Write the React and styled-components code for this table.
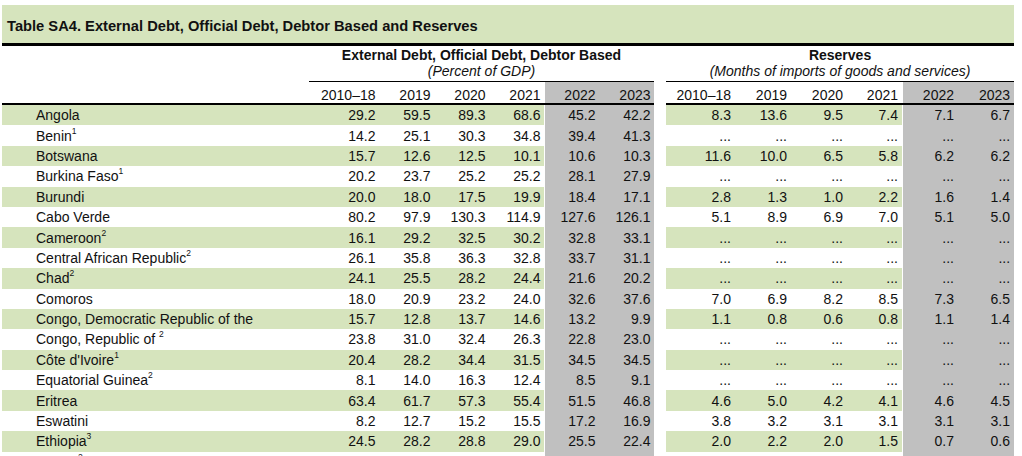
import React from 'react';
import styled, { createGlobalStyle } from 'styled-components';

const GREEN = '#d6e4bd';
const GRAY = '#c0c0c0';

const GlobalStyle = createGlobalStyle`
  html, body {
    margin: 0;
    padding: 0;
    background: #fff;
  }
  body {
    font-family: "Liberation Sans", Arial, sans-serif;
    color: #111;
    overflow: hidden;
  }
`;

const Page = styled.div`
  width: 1012px;
  margin: 5px 0 0 2px;
`;

const TitleBar = styled.div`
  height: 41px;
  box-sizing: border-box;
  padding: 13px 0 0 5px;
  background: ${GREEN};
  border-bottom: 3px solid #000;
  font-size: 14.7px;
  font-weight: bold;
  line-height: 16px;
  white-space: nowrap;
`;

const Table = styled.table`
  width: 1012px;
  table-layout: fixed;
  border-collapse: collapse;
  border-spacing: 0;
  font-size: 14px;
`;

const GroupTitle = styled.th`
  height: 17px;
  padding: 0;
  line-height: 16px;
  font-weight: bold;
  text-align: center;
  vertical-align: bottom;
  white-space: nowrap;
`;

const SubTitle = styled.th`
  height: 18px;
  padding: 0;
  line-height: 16px;
  font-weight: normal;
  font-style: italic;
  text-align: center;
  vertical-align: top;
  white-space: nowrap;
  border-bottom: ${(p) => (p.$ruled ? '1px solid #000' : 'none')};
`;

const YearCell = styled.th`
  height: 21px;
  padding: 0 ${(p) => p.$pad || 4}px 0 0;
  line-height: 16px;
  font-weight: normal;
  text-align: right;
  vertical-align: bottom;
  white-space: nowrap;
  background: ${(p) => (p.$shaded ? GRAY : 'transparent')};
  box-shadow: ${(p) => (p.$edge ? 'inset 1px 0 0 #fff' : 'none')};
  border-bottom: ${(p) => (p.$ruled ? '2px solid #000' : 'none')};
`;

const Row = styled.tr`
  background: ${(p) => (p.$striped ? GREEN : 'transparent')};
`;

const NameCell = styled.td`
  height: 20.4px;
  padding: 0 0 0 34px;
  line-height: 16px;
  text-align: left;
  vertical-align: middle;
  white-space: nowrap;
`;

const ValueCell = styled.td`
  height: 20.4px;
  padding: 0 ${(p) => p.$pad || 4}px 0 0;
  line-height: 16px;
  text-align: right;
  vertical-align: middle;
  white-space: nowrap;
  background: ${(p) => (p.$shaded ? GRAY : 'transparent')};
  box-shadow: ${(p) => (p.$edge ? 'inset 1px 0 0 #fff' : 'none')};
`;

const Spacer = styled.td`
  padding: 0;
  background: #fff;
`;

const SpacerHead = styled.th`
  padding: 0;
  background: #fff;
`;

const Note = styled.sup`
  position: relative;
  top: -7px;
  vertical-align: baseline;
  font-size: 8.5px;
  line-height: 0;
`;

const leftCols = [307, 70, 55, 55, 55, 55, 55];
const rightCols = [12, 69, 56, 56, 55, 56, 56];
const years = ['2010–18', '2019', '2020', '2021', '2022', '2023'];
const rightPad = [4, 4, 4, 4, 4, 4];
const leftPad = [3.5, 3.5, 3.5, 3.5, 3.5, 3.5];
const NA = ['...', '...', '...', '...', '...', '...'];

const rows = [
  ['Angola', '', ['29.2', '59.5', '89.3', '68.6', '45.2', '42.2'], ['8.3', '13.6', '9.5', '7.4', '7.1', '6.7']],
  ['Benin', '1', ['14.2', '25.1', '30.3', '34.8', '39.4', '41.3'], NA],
  ['Botswana', '', ['15.7', '12.6', '12.5', '10.1', '10.6', '10.3'], ['11.6', '10.0', '6.5', '5.8', '6.2', '6.2']],
  ['Burkina Faso', '1', ['20.2', '23.7', '25.2', '25.2', '28.1', '27.9'], NA],
  ['Burundi', '', ['20.0', '18.0', '17.5', '19.9', '18.4', '17.1'], ['2.8', '1.3', '1.0', '2.2', '1.6', '1.4']],
  ['Cabo Verde', '', ['80.2', '97.9', '130.3', '114.9', '127.6', '126.1'], ['5.1', '8.9', '6.9', '7.0', '5.1', '5.0']],
  ['Cameroon', '2', ['16.1', '29.2', '32.5', '30.2', '32.8', '33.1'], NA],
  ['Central African Republic', '2', ['26.1', '35.8', '36.3', '32.8', '33.7', '31.1'], NA],
  ['Chad', '2', ['24.1', '25.5', '28.2', '24.4', '21.6', '20.2'], NA],
  ['Comoros', '', ['18.0', '20.9', '23.2', '24.0', '32.6', '37.6'], ['7.0', '6.9', '8.2', '8.5', '7.3', '6.5']],
  ['Congo, Democratic Republic of the', '', ['15.7', '12.8', '13.7', '14.6', '13.2', '9.9'], ['1.1', '0.8', '0.6', '0.8', '1.1', '1.4']],
  ['Congo, Republic of ', '2', ['23.8', '31.0', '32.4', '26.3', '22.8', '23.0'], NA],
  ['Côte d\'Ivoire', '1', ['20.4', '28.2', '34.4', '31.5', '34.5', '34.5'], NA],
  ['Equatorial Guinea', '2', ['8.1', '14.0', '16.3', '12.4', '8.5', '9.1'], NA],
  ['Eritrea', '', ['63.4', '61.7', '57.3', '55.4', '51.5', '46.8'], ['4.6', '5.0', '4.2', '4.1', '4.6', '4.5']],
  ['Eswatini', '', ['8.2', '12.7', '15.2', '15.5', '17.2', '16.9'], ['3.8', '3.2', '3.1', '3.1', '3.1', '3.1']],
  ['Ethiopia', '3', ['24.5', '28.2', '28.8', '29.0', '25.5', '22.4'], ['2.0', '2.2', '2.0', '1.5', '0.7', '0.6']],
  ['Gabon', '2', ['33.4', '35.8', '46.3', '45.1', '38.9', '36.2'], NA],
];

function App() {
  const renderValues = (values, pads) =>
    values.map((v, i) => (
      <ValueCell key={i} $shaded={i >= 4} $edge={i === 4} $pad={pads[i]}>
        {v}
      </ValueCell>
    ));

  const renderYears = (pads) =>
    years.map((y, i) => (
      <YearCell key={y} $shaded={i >= 4} $edge={i === 4} $pad={pads[i]} $ruled>
        {y}
      </YearCell>
    ));

  return (
    <Page>
      <GlobalStyle />
      <TitleBar>Table SA4. External Debt, Official Debt, Debtor Based and Reserves</TitleBar>
      <Table>
        <colgroup>
          {leftCols.concat(rightCols).map((w, i) => (
            <col key={i} style={{ width: w }} />
          ))}
        </colgroup>
        <thead>
          <tr>
            <GroupTitle />
            <GroupTitle colSpan={6}>External Debt, Official Debt, Debtor Based</GroupTitle>
            <SpacerHead />
            <GroupTitle colSpan={6}>Reserves</GroupTitle>
          </tr>
          <tr>
            <SubTitle />
            <SubTitle colSpan={6} $ruled>(Percent of GDP)</SubTitle>
            <SpacerHead />
            <SubTitle colSpan={6} $ruled>(Months of imports of goods and services)</SubTitle>
          </tr>
          <tr>
            <YearCell $ruled />
            {renderYears(leftPad)}
            <SpacerHead />
            {renderYears(rightPad)}
          </tr>
        </thead>
        <tbody>
          {rows.map(([name, note, debt, reserves], i) => (
            <Row key={name} $striped={i % 2 === 0}>
              <NameCell>
                {name}
                {note && <Note>{note}</Note>}
              </NameCell>
              {renderValues(debt, leftPad)}
              <Spacer />
              {renderValues(reserves, rightPad)}
            </Row>
          ))}
        </tbody>
      </Table>
    </Page>
  );
}

export default App;
